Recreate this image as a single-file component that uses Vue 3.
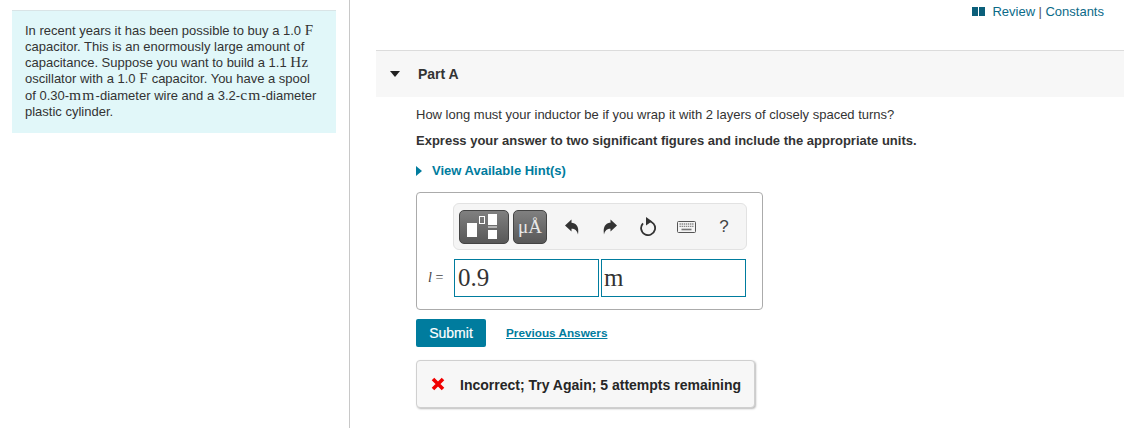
<template>
  <div class="page">
    <aside class="left">
      <div class="intro">
        In recent years it has been possible to buy a 1.0 <span class="math">F</span>
        capacitor. This is an enormously large amount of capacitance. Suppose you want to build a 1.1 <span class="math">Hz</span>
        oscillator with a 1.0 <span class="math">F</span> capacitor. You have a spool of 0.30-<span class="math math-wide">mm</span>-diameter wire and a 3.2-<span class="math math-wide">cm</span>-diameter plastic cylinder.
      </div>
    </aside>
    <main class="right">
      <div class="topbar">
        <svg class="book" width="13" height="9" viewBox="0 0 13 9">
          <path d="M0 0 H6 V9 H0 Z M7 0 H13 V9 H7 Z" fill="#0b5f7a" />
        </svg>
        <a class="toplink">Review</a>
        <span class="sep">|</span>
        <a class="toplink">Constants</a>
      </div>
      <div class="part-head">
        <span class="caret-down"></span>
        <span class="part-title">Part A</span>
      </div>
      <div class="part-body">
        <p class="question">How long must your inductor be if you wrap it with 2 layers of closely spaced turns?</p>
        <p class="instruction">Express your answer to two significant figures and include the appropriate units.</p>
        <div class="hint">
          <span class="caret-right"></span>
          <span>View Available Hint(s)</span>
        </div>
        <div class="answer-box">
          <div class="toolbar">
            <div class="tool-btn tool-wide">
              <svg width="36" height="26" viewBox="0 0 36 26">
                <rect x="1" y="9" width="10" height="14" fill="#fff" />
                <rect x="13.500" y="2.500" width="5" height="7" fill="none" stroke="#fff" stroke-width="1" />
                <rect x="22" y="0" width="9" height="11" fill="#fff" />
                <rect x="22" y="12.500" width="9" height="1" fill="#fff" />
                <rect x="22" y="16" width="9" height="9" fill="#fff" />
              </svg>
            </div>
            <div class="tool-btn tool-unit">μÅ</div>
            <div class="tool-icons">
              <svg width="18" height="16" viewBox="0 0 18 16">
                <path d="M0 6.500 L6.500 0.500 V3.800 C10.500 3.800 14.500 7 13 15.500 C12 11.500 10 9.800 6.500 9.800 V12.500 Z" fill="#333" />
              </svg>
              <svg width="17" height="16" viewBox="0 0 17 16">
                <path d="M14 6.500 L7.500 0.500 V3.800 C3.500 3.800 -0.500 7 1 15.500 C2 11.500 4 9.800 7.500 9.800 V12.500 Z" fill="#333" />
              </svg>
              <svg width="17" height="19" viewBox="0 0 17 19">
                <path d="M8 4.100 A7 7 0 1 1 3 6.300" fill="none" stroke="#333" stroke-width="1.800" />
                <path d="M6 0 L12 4.300 L6 8.500 Z" fill="#333" />
              </svg>
              <svg width="19" height="12" viewBox="0 0 19 12">
                <rect x="0.500" y="0.500" width="18" height="11" rx="1" fill="#f4f4f4" stroke="#555" />
                <path d="M2.500 3 H16.500 M2.500 5.300 H16.500" stroke="#888" stroke-width="1.300" stroke-dasharray="1.400 .7" />
                <path d="M4.500 8.500 H14.500" stroke="#777" stroke-width="1.600" />
              </svg>
              <span class="help">?</span>
            </div>
          </div>
          <div class="input-row">
            <span class="var-label"><i>l</i> =</span>
            <div class="field">0.9</div>
            <div class="field field-unit">m</div>
          </div>
        </div>
        <div class="actions">
          <button class="submit">Submit</button>
          <a class="prev">Previous Answers</a>
        </div>
        <div class="feedback">
          <svg width="14" height="14" viewBox="0 0 14 14">
            <path d="M2 2 L12 12 M12 2 L2 12" stroke="#f00000" stroke-width="3.600" />
          </svg>
          <span class="feedback-text">Incorrect; Try Again; 5 attempts remaining</span>
        </div>
      </div>
    </main>
  </div>
</template>

<script setup>
</script>

<style>
html, body {
  margin: 0;
  background: #fff;
}
</style>

<style scoped>
.page {
  display: flex;
  width: 1128px;
  height: 428px;
  overflow: hidden;
  font-family: "Liberation Sans", Arial, sans-serif;
  color: #333;
}

.left {
  box-sizing: border-box;
  width: 350px;
  padding: 10px 13px 0 12px;
  border-right: 1px solid #c8c8c8;
}

.intro {
  box-sizing: border-box;
  height: 123px;
  padding: 12px 13px 0;
  background: #e1f7f9;
  border-top: 1px solid #d9e4e6;
  font-size: 13px;
  line-height: 16px;
}

.math {
  font-family: "Liberation Serif", serif;
  font-size: 15px;
  line-height: 1;
  letter-spacing: 0.5px;
}

.math-wide {
  font-size: 15.500px;
  letter-spacing: 1.200px;
}

.right {
  flex: 1;
  min-width: 0;
}

.topbar {
  display: flex;
  justify-content: flex-end;
  align-items: center;
  gap: 3.500px;
  height: 23px;
  margin-bottom: 27px;
  padding-right: 24px;
  font-size: 13px;
}

.book {
  margin-right: 3.500px;
}

.toplink {
  color: #0b6a88;
}

.sep {
  color: #555;
}

.part-head {
  display: flex;
  align-items: center;
  box-sizing: border-box;
  height: 47px;
  margin: 0 4px 0 26px;
  padding-left: 14px;
  background: #f7f7f7;
  border-top: 1px solid #dcdcdc;
}

.caret-down {
  width: 0;
  height: 0;
  border-left: 5.500px solid transparent;
  border-right: 5.500px solid transparent;
  border-top: 6px solid #222;
  margin-right: 17px;
}

.part-title {
  margin-left: 1px;
  font-size: 14px;
  font-weight: bold;
  color: #333;
}

.part-body {
  padding-left: 66px;
}

.question {
  margin: 10px 0 0;
  font-size: 13px;
  line-height: 15px;
}

.instruction {
  margin: 11px 0 0;
  font-size: 13px;
  line-height: 15px;
  font-weight: bold;
}

.hint {
  display: flex;
  align-items: center;
  height: 15px;
  margin-top: 15px;
  color: #007c9e;
  font-size: 13px;
  font-weight: bold;
}

.caret-right {
  width: 0;
  height: 0;
  border-top: 5px solid transparent;
  border-bottom: 5px solid transparent;
  border-left: 6px solid #007c9e;
  margin-right: 10px;
}

.answer-box {
  box-sizing: border-box;
  width: 347px;
  height: 118px;
  margin-top: 14px;
  padding: 10px 16px 0 36px;
  border: 1px solid #ababab;
  border-radius: 4px;
}

.toolbar {
  display: flex;
  align-items: center;
  box-sizing: border-box;
  width: 294px;
  height: 47px;
  padding-left: 5px;
  background: #f5f5f5;
  border: 1px solid #e2e2e2;
  border-radius: 6px;
}

.tool-btn {
  display: flex;
  align-items: center;
  justify-content: center;
  box-sizing: border-box;
  height: 34px;
  background: linear-gradient(#808080, #585858);
  border: 1px solid #444;
  border-radius: 5px;
}

.tool-wide {
  width: 50px;
}

.tool-unit {
  width: 34px;
  margin-left: 4px;
  color: #e8e8e8;
  font-family: "Liberation Serif", serif;
  font-size: 19px;
}

.tool-icons {
  display: flex;
  align-items: center;
  margin-left: 18px;
  gap: 20px;
}

.help {
  width: 16px;
  text-align: center;
  font-size: 17px;
  color: #444;
}

.input-row {
  display: flex;
  align-items: center;
  gap: 2px;
  margin-top: 9px;
  margin-left: 1px;
  position: relative;
}

.var-label {
  position: absolute;
  left: -26px;
  font-size: 14px;
  color: #444;
  font-family: "Liberation Serif", serif;
}

.field {
  box-sizing: border-box;
  width: 145px;
  height: 38px;
  padding-left: 3px;
  border: 1px solid #007c9e;
  font-family: "Liberation Serif", serif;
  font-size: 25px;
  line-height: 35px;
  color: #333;
}

.field-unit {
  padding-left: 2px;
}

.actions {
  display: flex;
  align-items: center;
  margin-top: 9px;
}

.submit {
  width: 70px;
  height: 28px;
  padding: 0;
  background: #007c9e;
  border: none;
  border-radius: 2px;
  color: #fff;
  font-family: inherit;
  font-size: 14px;
  -webkit-text-stroke: 0.2px #fff;
}

.prev {
  margin-left: 20px;
  padding-bottom: 2px;
  color: #007c9e;
  font-size: 11.750px;
  font-weight: bold;
  text-decoration: underline;
}

.feedback {
  display: flex;
  align-items: center;
  box-sizing: border-box;
  width: 339px;
  height: 48px;
  margin-top: 13px;
  padding-left: 14px;
  gap: 15px;
  background: #f7f7f7;
  border: 1px solid #d0d0d0;
  border-radius: 4px;
  box-shadow: 1px 1px 2px #bbb;
  font-size: 14px;
  font-weight: bold;
  color: #262626;
}

.feedback-text {
  padding-top: 2px;
}
</style>
